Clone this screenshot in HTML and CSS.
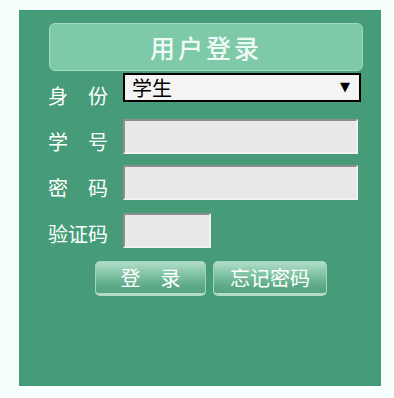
FILE: index.html
```html
<!DOCTYPE html>
<html lang="zh-CN">
<head>
<meta charset="utf-8">
<title>用户登录</title>
<link rel="stylesheet" href="styles.css">
</head>
<body>
<div class="panel">
  <div class="title">用户登录</div>
  <form class="form">
    <div class="row row-first">
      <label class="label">身　份</label>
      <span class="select-wrap">
        <select class="select">
          <option>学生</option>
          <option>教师</option>
        </select>
        <span class="arrow">▼</span>
      </span>
    </div>
    <div class="row">
      <label class="label">学　号</label>
      <input class="field" type="text">
    </div>
    <div class="row row-tight">
      <label class="label">密　码</label>
      <input class="field" type="password">
    </div>
    <div class="row">
      <label class="label label-up">验证码</label>
      <input class="field field-short" type="text">
    </div>
    <div class="buttons">
      <button type="button" class="btn btn-login">登　录</button>
      <button type="button" class="btn btn-forgot">忘记密码</button>
    </div>
  </form>
</div>
</body>
</html>
```
FILE: styles.css
```css
html, body {
  margin: 0;
  padding: 0;
}
body {
  background: #f6fffd;
  font-family: "Noto Sans CJK SC", "Noto Sans", sans-serif;
}
.panel {
  margin: 10px 0 0 19px;
  width: 362px;
  height: 376px;
  background: #469c78;
  padding-top: 13px;
  box-sizing: border-box;
}
.title {
  margin-left: 30px;
  width: 314px;
  height: 48px;
  box-sizing: border-box;
  background: #7ecaa8;
  border: 1px solid #a3d9c0;
  border-radius: 6px;
  color: #eefaf4;
  font-size: 25px;
  font-weight: 500;
  line-height: 46px;
  letter-spacing: 3px;
  text-indent: 0;
  text-align: center;
}
.form {
  margin: 2px 0 0 29px;
  display: flex;
  flex-direction: column;
}
.row {
  display: flex;
  align-items: flex-start;
  margin-top: 13px;
}
.row-first {
  margin-top: 0;
}
.row-tight {
  margin-top: 11px;
}
.label {
  width: 75px;
  margin-top: 13px;
  color: #ffffff;
  font-size: 20px;
  line-height: 20px;
  white-space: nowrap;
}
.label-up {
  margin-top: 11px;
}
.select-wrap {
  position: relative;
  display: block;
}
.select {
  appearance: none;
  -webkit-appearance: none;
  display: block;
  width: 238px;
  height: 29px;
  margin: 0;
  box-sizing: border-box;
  border: 2px solid #000;
  border-radius: 0;
  background: #f4f4f4;
  color: #000;
  font-family: "Noto Sans CJK SC", sans-serif;
  font-size: 20px;
  line-height: 25px;
  padding: 0 0 0 7px;
}
.arrow {
  position: absolute;
  right: 11px;
  top: 6px;
  font-size: 13px;
  line-height: 16px;
  color: #000;
  pointer-events: none;
  font-family: "DejaVu Sans", sans-serif;
}
.field {
  display: block;
  width: 235px;
  height: 35px;
  margin: 0;
  box-sizing: border-box;
  background: #e8e8e8;
  border-style: solid;
  border-width: 2px;
  border-color: #8e8e8e #f2f2f2 #f2f2f2 #8e8e8e;
  padding: 0 4px;
  font-size: 16px;
}
.field-short {
  width: 88px;
}
.buttons {
  display: flex;
  gap: 7px;
  margin: 13px 0 0 47px;
}
.btn {
  height: 35px;
  box-sizing: border-box;
  border: 1px solid #a4d3bd;
  border-bottom: 3px solid #b2dcc8;
  border-radius: 5px;
  background: linear-gradient(to bottom, #b2ddc8 0%, #8ccaad 30%, #5eab87 75%, #54a37e 100%);
  color: #ffffff;
  font-family: "Noto Sans CJK SC", sans-serif;
  font-size: 20px;
  line-height: 28px;
  padding: 0;
  text-align: center;
}
.btn-login {
  width: 111px;
}
.btn-forgot {
  width: 114px;
}
```
